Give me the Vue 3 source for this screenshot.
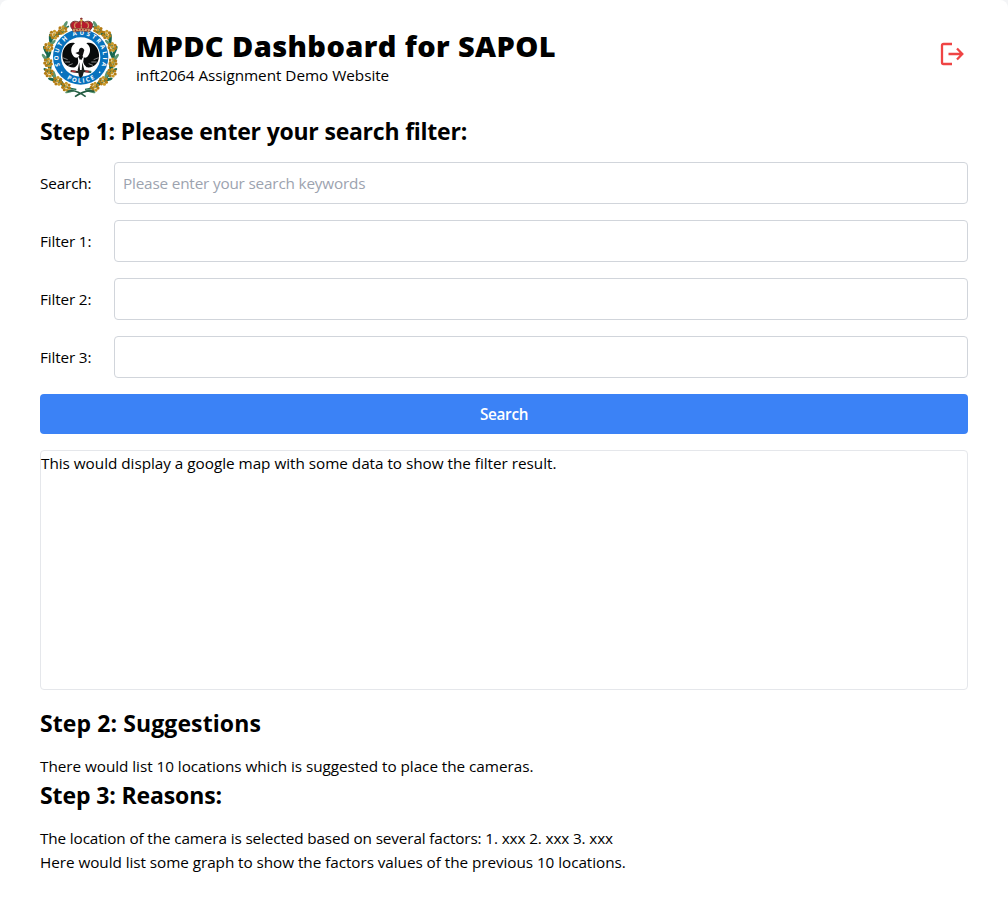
<script setup>
const filters = ['Filter 1:', 'Filter 2:', 'Filter 3:']

const point = (deg, r) => {
  const a = (deg * Math.PI) / 180
  return { x: 133 + r * Math.sin(a), y: 136 - r * Math.cos(a) }
}

// Wattle blossoms and leaves, mirrored on both sides of the wreath
const blossoms = [[33, 97], [49, 104], [72, 100], [99, 98], [116, 105], [136, 98], [154, 98]]
  .flatMap(([d, r]) => [point(d, r), point(-d, r)])
const leaves = [26, 40, 58, 64, 79, 86, 91, 107, 113, 125, 129, 145, 163]
  .flatMap((d, i) => [[d, i, 1], [-d, i, -1]])
  .map(([d, i, s]) => ({ ...point(d, i % 2 ? 95 : 106), rot: d + 90 + (i % 2 ? -20 : 35) * s, light: i % 3 === 0 }))
const petals = [[-8, -7], [1, -10], [9, -5], [-10, 2], [0, 0], [10, 4], [-5, 9], [4, 10]]
</script>

<template>
  <div class="page">
    <main class="card">
      <header class="header">
        <svg class="logo" viewBox="12 12 240 246" role="img" aria-label="South Australia Police">
          <path d="M99 43A98 98 0 0 0 121 233M169 43A98 98 0 0 1 147 233" fill="none" stroke="#277057" stroke-width="5" />
          <ellipse v-for="(l, i) in leaves" :key="'l' + i" rx="4.5" ry="15" :fill="l.light ? '#5b9672' : '#17674f'" :transform="`translate(${l.x} ${l.y}) rotate(${l.rot})`" />
          <g v-for="(b, i) in blossoms" :key="'b' + i" :transform="`translate(${b.x} ${b.y})`">
            <circle v-for="(p, j) in petals" :key="j" :cx="p[0]" :cy="p[1]" r="4.8" :fill="j % 3 === 1 ? '#c99a29' : '#b47c14'" />
          </g>
          <path d="M94 238Q119 231 149 254M175 238Q148 232 117 254" fill="none" stroke="#235c42" stroke-width="5" />
          <circle cx="134" cy="135" r="86" fill="#fff" />
          <circle cx="134" cy="135" r="83" fill="#0872bd" />
          <circle cx="134" cy="135" r="59" fill="#fff" />
          <path id="ring-top" d="M79.5 174.5A67 67 0 1 1 188.500 174.500" fill="none" />
          <path id="ring-bottom" d="M79 189A77 77 0 0 0 189 189" fill="none" />
          <text class="ring-text"><textPath href="#ring-top" startOffset="50%" text-anchor="middle" textLength="262">SOUTH AUSTRALIA</textPath></text>
          <text class="ring-text"><textPath href="#ring-bottom" startOffset="50%" text-anchor="middle" textLength="88">POLICE</textPath></text>
          <circle cx="77" cy="181" r="2.5" fill="#fff" /><circle cx="191" cy="181" r="2.5" fill="#fff" />

          <!-- Piping shrike -->
          <path d="M117 94C97 87 80 108 79 128C77 153 96 169 117 166L124 158L129 147L134 142L140 147L145 158L152 166C172 169 191 153 189 128C188 108 171 87 151 94C164 102 166 119 156 132C149 141 142 138 134 125C126 138 119 141 112 132C102 119 104 102 117 94Z" fill="#080b0b" />
          <path d="M80 137L95 143M86 150L102 150M97 160L110 155M188 137L173 143M182 150L166 150M171 160L158 155" stroke="#fff" stroke-width="1.5" />
          <path d="M125 133Q132 139 134 155Q136 139 144 133L140 161L147 172H121L128 161Z" fill="#fff" />
          <path d="M118 123L128 119L130 111Q138 102 145 114L141 128L136 142L130 129Z" fill="#111" />
          <path d="M130 151L125 174L129 193L134 198L140 192L145 174L139 151L137 174H132Z" fill="#171c1b" />
          <path d="M104 177L124 180L143 177L165 180" fill="none" stroke="#20241f" stroke-width="6" />
          <path d="M106 177L119 179M148 178L158 179" stroke="#b7393c" stroke-width="5" />
          <path d="M160 179H166" stroke="#398b78" stroke-width="5" />

          <!-- Crown -->
          <path d="M110 53C95 36 110 22 127 30L136 25L146 30C163 22 179 36 164 53Z" fill="#b61c2c" stroke="#70413a" stroke-width="3" />
          <path d="M118 49Q111 34 124 31M155 49Q162 34 149 31M136 48V28" fill="none" stroke="#d5b568" stroke-width="4" stroke-dasharray="3 1" />
          <circle cx="136" cy="25" r="4" fill="#d3ad48" /><path d="M136 17V23M132 20H140" stroke="#8c3032" stroke-width="3" />
          <path d="M109 51Q136 45 164 51L160 60Q136 54 112 60Z" fill="#d9bd76" stroke="#76302c" stroke-width="2" />
          <path d="M116 55Q136 50 157 55" fill="none" stroke="#a71d30" stroke-width="4" stroke-dasharray="5 4" />
        </svg>
        <div class="titles">
          <h1>MPDC Dashboard for SAPOL</h1>
          <p class="sub">inft2064 Assignment Demo Website</p>
        </div>
        <button class="logout" aria-label="Log out">
          <svg viewBox="0 0 24 24" width="24" height="24" fill="none" stroke="#ef4444" stroke-width="2.3">
            <path d="M12 2H3.500Q2 2 2 3.500V20.500Q2 22 3.500 22H12M8.500 12H22M17 6.500L22.300 12L17 17.500" />
          </svg>
        </button>
      </header>

      <h2 class="step1">Step 1: Please enter your search filter:</h2>
      <form class="form" @submit.prevent>
        <label class="row"><span class="label">Search:</span><input placeholder="Please enter your search keywords" /></label>
        <label v-for="f in filters" :key="f" class="row"><span class="label">{{ f }}</span><input /></label>
        <button class="search">Search</button>
      </form>
      <section class="map">This would display a google map with some data to show the filter result.</section>

      <h2 class="step2">Step 2: Suggestions</h2>
      <p class="suggestions">There would list 10 locations which is suggested to place the cameras.</p>
      <h2 class="step3">Step 3: Reasons:</h2>
      <p class="factors">The location of the camera is selected based on several factors: 1. xxx 2. xxx 3. xxx</p>
      <p class="graph">Here would list some graph to show the factors values of the previous 10 locations.</p>
    </main>
  </div>
</template>

<style>
body { background: #f3f4f6; }
</style>

<style scoped>
* { box-sizing: border-box; }
.page { font: 15.3px/24px "Open Sans", "Noto Sans", sans-serif; color: #000; }
.card { min-height: 910px; padding: 16px 40px; background: #fff; border-radius: 8px 8px 0 0; }
h1, h2, p { margin: 0; white-space: nowrap; }
.header { display: flex; height: 84px; }
.logo { width: 80px; height: 82px; flex: none; }
.ring-text { font: 700 18px "Open Sans", sans-serif; fill: #fff; }
.titles { margin-left: 16px; padding-top: 12px; }
h1 { font-size: 29px; line-height: 35px; font-weight: 800; letter-spacing: 0.4px; }
.sub { letter-spacing: -0.04px; }
.logout { margin: 26px 4px 0 auto; width: 24px; height: 24px; padding: 0; border: 0; background: none; }
.logout svg { display: block; }
h2 { font-size: 23px; line-height: 32px; font-weight: 700; }
.step1 { margin-top: 15px; letter-spacing: -0.25px; word-spacing: 0.2px; }
.form { display: flex; flex-direction: column; gap: 16px; margin-top: 15px; }
.row { display: flex; align-items: center; }
.label { width: 74px; flex: none; white-space: nowrap; letter-spacing: -0.15px; }
input { flex: 1; min-width: 0; height: 42px; padding: 8px; border: 1px solid #d1d5db; border-radius: 4px; font: inherit; letter-spacing: -0.18px; background: #fff; }
input::placeholder { color: #9ca3af; opacity: 1; }
.search { height: 40px; padding: 0; border: 0; border-radius: 4px; background: #3b82f6; color: #fff; font: inherit; font-weight: 600; letter-spacing: -0.3px; }
.map { height: 240px; margin-top: 16px; border: 1px solid #e5e7eb; border-radius: 4px; letter-spacing: -0.03px; }
.step2 { margin-top: 17px; letter-spacing: 0.1px; }
.suggestions, .factors { margin-top: 15px; }
.suggestions { letter-spacing: -0.045px; }
.step3 { margin-top: 1px; letter-spacing: -0.12px; }
.factors { letter-spacing: -0.13px; }
.graph { letter-spacing: -0.06px; }
</style>
